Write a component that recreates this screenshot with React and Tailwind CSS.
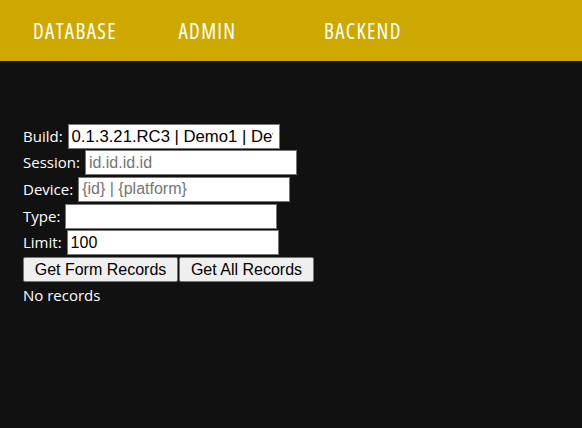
const navItems = ['DATABASE', 'ADMIN', 'BACKEND']

const fields = [
  { label: 'Build:', value: '0.1.3.21.RC3 | Demo1 | Dev', placeholder: '', big: true },
  { label: 'Session:', value: '', placeholder: 'id.id.id.id' },
  { label: 'Device:', value: '', placeholder: '{id} | {platform}' },
  { label: 'Type:', value: '', placeholder: '' },
  { label: 'Limit:', value: '100', placeholder: '' },
]

export default function App() {
  return (
    <div className="min-h-screen bg-[#111111] font-['Open_Sans',sans-serif] text-white">
      <nav className="flex h-[61px] items-center bg-[#cda900] pl-[33px] pt-[2px]">
        {navItems.map(item => (
          <a key={item} className="w-[145.5px] text-[21px] font-stretch-condensed tracking-[1.3px] leading-none text-white">
            {item}
          </a>
        ))}
      </nav>

      <div className="pl-[23px] pt-[62px]">
        {fields.map(f => (
          <div key={f.label} className="flex h-[26.6px] items-center gap-[5px]">
            <label className="text-[15px] leading-none">{f.label}</label>
            <input
              defaultValue={f.value}
              placeholder={f.placeholder}
              className={`h-[25px] w-[212px] border border-[#767676] bg-white pl-[3px] font-['Liberation_Sans',Arial,sans-serif] text-black placeholder:text-[#757575] outline-none ${f.big ? 'pr-[6px] text-[16.7px]' : 'pr-[3px] text-[16px]'}`}
            />
          </div>
        ))}

        <div className="mt-[1px] flex">
          <button className="h-[25px] w-[155px] rounded-[2px] border border-[#767676] bg-[#efefef] font-['Liberation_Sans',Arial,sans-serif] text-[16px] text-black">
            Get Form Records
          </button>
          <button className="ml-[1px] h-[25px] w-[135px] rounded-[2px] border border-[#767676] bg-[#efefef] font-['Liberation_Sans',Arial,sans-serif] text-[16px] text-black">
            Get All Records
          </button>
        </div>

        <p className="mt-[2px] text-[15px] leading-[22px]">No records</p>
      </div>
    </div>
  )
}
